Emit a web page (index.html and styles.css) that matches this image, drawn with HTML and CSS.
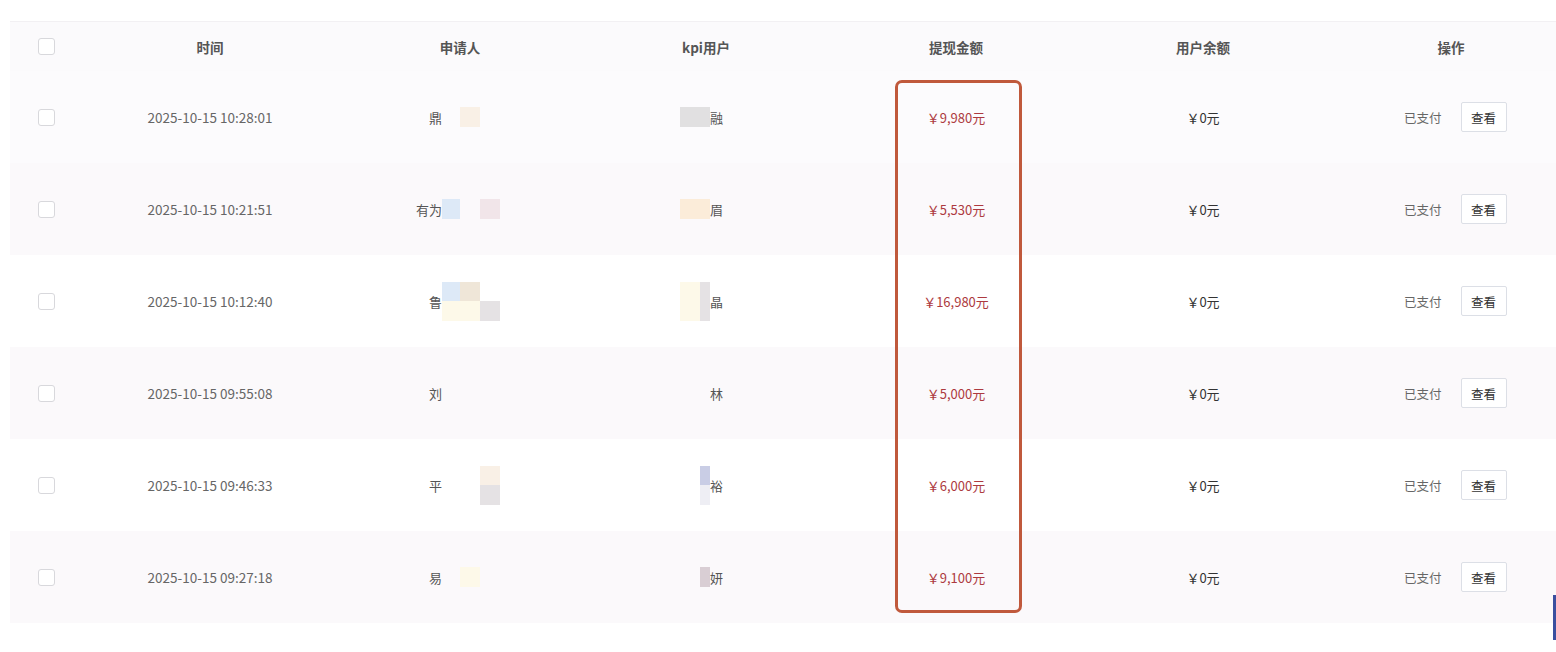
FILE: index.html
```html
<!DOCTYPE html>
<html lang="zh-CN">
<head>
<meta charset="utf-8">
<title>提现列表</title>
<link rel="stylesheet" href="styles.css">
</head>
<body>
<div class="table">
  <div class="row head">
    <div class="cell"><span class="checkbox"></span></div>
    <div class="cell">时间</div>
    <div class="cell">申请人</div>
    <div class="cell">kpi用户</div>
    <div class="cell">提现金额</div>
    <div class="cell">用户余额</div>
    <div class="cell">操作</div>
  </div>

  <div class="row tint">
    <div class="cell"><span class="checkbox"></span></div>
    <div class="cell time">2025-10-15 10:28:01</div>
    <div class="cell name-cell"><span class="name">鼎</span><span class="mos"><i></i><i class="c-beige"></i><i></i></span></div>
    <div class="cell kpi-cell"><span class="kmos"><i class="c-gray"></i><i class="c-gray"></i></span><span class="kname">融</span></div>
    <div class="cell amount">￥9,980元</div>
    <div class="cell balance">￥0元</div>
    <div class="cell ops"><span class="status">已支付</span><button class="btn">查看</button></div>
  </div>

  <div class="row tint2">
    <div class="cell"><span class="checkbox"></span></div>
    <div class="cell time">2025-10-15 10:21:51</div>
    <div class="cell name-cell"><span class="name">有为</span><span class="mos"><i class="c-blue"></i><i></i><i class="c-pink"></i></span></div>
    <div class="cell kpi-cell"><span class="kmos"><i class="c-peach"></i><i class="c-peach"></i></span><span class="kname">眉</span></div>
    <div class="cell amount">￥5,530元</div>
    <div class="cell balance">￥0元</div>
    <div class="cell ops"><span class="status">已支付</span><button class="btn">查看</button></div>
  </div>

  <div class="row">
    <div class="cell"><span class="checkbox"></span></div>
    <div class="cell time">2025-10-15 10:12:40</div>
    <div class="cell name-cell"><span class="name">鲁</span><span class="mos two"><i class="c-blue"></i><i class="c-beige2"></i><i></i><i class="c-cream"></i><i class="c-cream"></i><i class="c-gray2"></i></span></div>
    <div class="cell kpi-cell"><span class="kmos two"><i class="c-cream"></i><i class="c-gray2"></i><i class="c-cream"></i><i class="c-gray2"></i></span><span class="kname">晶</span></div>
    <div class="cell amount">￥16,980元</div>
    <div class="cell balance">￥0元</div>
    <div class="cell ops"><span class="status">已支付</span><button class="btn">查看</button></div>
  </div>

  <div class="row tint2">
    <div class="cell"><span class="checkbox"></span></div>
    <div class="cell time">2025-10-15 09:55:08</div>
    <div class="cell name-cell"><span class="name">刘</span><span class="mos"><i></i><i></i><i></i></span></div>
    <div class="cell kpi-cell"><span class="kmos"><i></i><i></i></span><span class="kname">林</span></div>
    <div class="cell amount">￥5,000元</div>
    <div class="cell balance">￥0元</div>
    <div class="cell ops"><span class="status">已支付</span><button class="btn">查看</button></div>
  </div>

  <div class="row">
    <div class="cell"><span class="checkbox"></span></div>
    <div class="cell time">2025-10-15 09:46:33</div>
    <div class="cell name-cell"><span class="name">平</span><span class="mos two"><i></i><i></i><i class="c-beige"></i><i></i><i></i><i class="c-gray2"></i></span></div>
    <div class="cell kpi-cell"><span class="kmos two"><i></i><i class="c-lav"></i><i></i><i class="c-light"></i></span><span class="kname">裕</span></div>
    <div class="cell amount">￥6,000元</div>
    <div class="cell balance">￥0元</div>
    <div class="cell ops"><span class="status">已支付</span><button class="btn">查看</button></div>
  </div>

  <div class="row tint2">
    <div class="cell"><span class="checkbox"></span></div>
    <div class="cell time">2025-10-15 09:27:18</div>
    <div class="cell name-cell"><span class="name">易</span><span class="mos"><i></i><i class="c-cream"></i><i></i></span></div>
    <div class="cell kpi-cell"><span class="kmos"><i></i><i class="c-mauve"></i></span><span class="kname">妍</span></div>
    <div class="cell amount">￥9,100元</div>
    <div class="cell balance">￥0元</div>
    <div class="cell ops"><span class="status">已支付</span><button class="btn">查看</button></div>
  </div>

  <div class="highlight"></div>
</div>
<div class="edge-bar"></div>
</body>
</html>
```

FILE: styles.css
```css
html, body {
  margin: 0;
  padding: 0;
  background: #ffffff;
  overflow: hidden;
}
body {
  width: 1556px;
  height: 652px;
  position: relative;
  font-family: "Noto Sans CJK SC", "Noto Sans", sans-serif;
  font-size: 13px;
  color: #666;
}
.table {
  position: relative;
  margin: 21px 0 0 10px;
  width: 1568px;
  border-top: 1px solid #f2f0f3;
}
.row {
  display: grid;
  grid-template-columns: 72px 256px 244px 248px 252px 242px 254px;
  height: 92px;
  background: #ffffff;
}
.row.head {
  height: 49px;
  background: #fbfafc;
  font-weight: 600;
  color: #555;
  font-size: 13.5px;
}
.row.tint { background: #fcfbfd; }
.row.tint2 { background: #fbf9fb; }
.cell {
  display: flex;
  align-items: center;
  justify-content: center;
  white-space: nowrap;
}
.checkbox {
  display: inline-block;
  width: 17px;
  height: 17px;
  border: 1px solid #d8d8dc;
  border-radius: 3px;
  background: #fff;
  box-sizing: border-box;
  margin-left: 0;
}
.time {
  font-size: 13.5px;
  color: #666;
}
.name-cell { justify-content: flex-start; }
.name {
  width: 104px;
  text-align: right;
  color: #555;
  font-size: 13px;
}
.mos, .kmos {
  display: grid;
  grid-template-columns: 18px 20px 20px;
  grid-auto-rows: 20px;
}
.kmos { grid-template-columns: 20px 10px; }
.mos.two, .kmos.two { grid-auto-rows: 19.5px; }
.mos i, .kmos i { display: block; }
.kpi-cell { justify-content: flex-start; padding-left: 98px; }
.kname { color: #555; font-size: 13px; }
.c-beige { background: #f9f0e6; }
.c-beige2 { background: #efe6d8; }
.c-blue { background: #dde9f7; }
.c-pink { background: #f1e5e9; }
.c-cream { background: #fdf9e9; }
.c-gray { background: #e1e0e1; }
.c-gray2 { background: #e5e2e4; }
.c-peach { background: #fbecd9; }
.c-lav { background: #c9cde5; }
.c-light { background: #eeeef4; }
.c-mauve { background: #d9ced4; }
.amount {
  color: #ad3a40;
  font-size: 13px;
}
.balance {
  color: #333;
  font-size: 13px;
}
.ops { justify-content: flex-start; padding-left: 80px; }
.status {
  color: #666;
  font-size: 12.5px;
  margin-right: 19px;
}
.btn {
  width: 46px;
  height: 30px;
  border: 1px solid #dcdfe6;
  border-radius: 2px;
  background: #fff;
  color: #333;
  font-family: inherit;
  font-size: 12.5px;
  padding: 0;
}
.highlight {
  position: absolute;
  left: 885px;
  top: 58px;
  width: 127px;
  height: 533px;
  border: 3px solid #c0593c;
  border-radius: 7px;
  box-sizing: border-box;
  pointer-events: none;
}
.edge-bar {
  position: absolute;
  right: 0;
  top: 595px;
  width: 3px;
  height: 45px;
  background: #3a4f9f;
}
```
